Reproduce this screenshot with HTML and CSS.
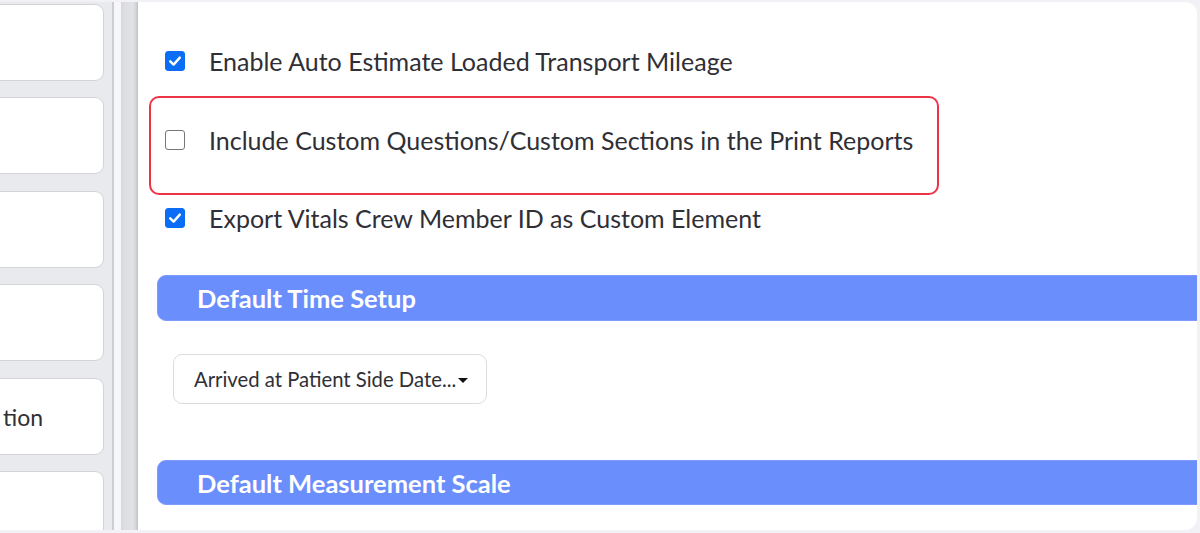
FILE: index.html
```html
<!DOCTYPE html>
<html>
<head>
<meta charset="utf-8">
<link rel="stylesheet" href="styles.css">
</head>
<body>
<div class="window">
  <aside class="sidebar">
    <div class="cards">
      <div class="card"></div>
      <div class="card"></div>
      <div class="card"></div>
      <div class="card"></div>
      <div class="card"><span class="card-text">tion</span></div>
      <div class="card"></div>
    </div>
  </aside>
  <div class="divider">
    <div class="div-line"></div>
    <div class="div-light"></div>
    <div class="div-band"></div>
  </div>
  <main class="content">
    <label class="row row-first">
      <span class="check checked"><svg viewBox="0 0 18 18" width="18" height="18"><path d="M4.2 9.3 L7.6 12.6 L13.8 5.6" fill="none" stroke="#fff" stroke-width="2.4" stroke-linecap="round" stroke-linejoin="round"/></svg></span>
      <span class="label">Enable Auto Estimate Loaded Transport Mileage</span>
    </label>
    <div class="highlight">
      <label class="row">
        <span class="check"></span>
        <span class="label">Include Custom Questions/Custom Sections in the Print Reports</span>
      </label>
    </div>
    <label class="row row-third">
      <span class="check checked"><svg viewBox="0 0 18 18" width="18" height="18"><path d="M4.2 9.3 L7.6 12.6 L13.8 5.6" fill="none" stroke="#fff" stroke-width="2.4" stroke-linecap="round" stroke-linejoin="round"/></svg></span>
      <span class="label">Export Vitals Crew Member ID as Custom Element</span>
    </label>
    <div class="section-head head-time">Default Time Setup</div>
    <div class="select">
      <span class="select-text">Arrived at Patient Side Date...</span>
      <span class="caret"></span>
    </div>
    <div class="section-head head-measure">Default Measurement Scale</div>
  </main>
</div>
</body>
</html>
```
FILE: styles.css
```css
* { box-sizing: border-box; }
html, body { margin: 0; padding: 0; }
body {
  width: 1200px;
  height: 533px;
  background: #f2f2f6;
  font-family: Lato, "Open Sans", sans-serif;
  color: #2f2f35;
  overflow: hidden;
}
.window {
  display: flex;
  height: 528px;
  margin: 2px 3px 0 0;
  background: #ffffff;
  border-radius: 0 12px 12px 0;
  overflow: hidden;
}
.sidebar {
  width: 112px;
  flex: none;
  background: #e9eaee;
  overflow: hidden;
}
.cards {
  display: flex;
  flex-direction: column;
  gap: 16.4px;
  padding-top: 2px;
}
.card {
  width: 114px;
  height: 77px;
  flex: none;
  margin-left: -10px;
  background: #fff;
  border: 1.5px solid #d3d4d8;
  border-radius: 9px;
  display: flex;
  align-items: center;
}
.card-text {
  margin-left: 12px;
  margin-top: 2px;
  font-size: 23px;
  color: #2f2f35;
}
.divider {
  display: flex;
  flex: none;
  width: 26px;
}
.div-line { width: 2px; background: #cdced2; }
.div-light { width: 7px; background: #f7f7f9; }
.div-band {
  width: 17px;
  background: linear-gradient(to right, #d4d5d9 0, #dddee2 3px, #e1e2e5 12px, #d3d4d8 15px, #bfc0c4 17px);
}
.content {
  flex: 1;
  padding: 39px 0 0 19px;
  display: flex;
  flex-direction: column;
  align-items: flex-start;
  min-width: 0;
}
.row {
  display: flex;
  align-items: center;
  height: 40px;
  padding-left: 8px;
}
.check {
  width: 20px;
  height: 20px;
  border: 1.5px solid #767676;
  border-radius: 3px;
  flex: none;
  background: #fff;
  display: flex;
  align-items: center;
  justify-content: center;
}
.check.checked {
  background: #0b6df5;
  border-color: #0b6df5;
}
.check svg { display: block; }
.label {
  margin-left: 24px;
  font-size: 25px;
  color: #2f2f35;
  white-space: nowrap;
}
.highlight {
  margin: 15px 0 0 -8px;
  width: 790px;
  height: 99px;
  border: 2px solid #ee3346;
  border-radius: 10px;
  padding: 22px 0 0 6px;
}
.row-third { margin-top: 3px; }
.section-head {
  align-self: stretch;
  height: 46px;
  margin-right: -12px;
  background: #6a8efc;
  border: 1px solid #7d9bfd;
  border-radius: 9px 0 0 9px;
  color: #ffffff;
  font-weight: 700;
  font-size: 25.5px;
  display: flex;
  align-items: center;
  padding-left: 39px;
}
.head-time { margin-top: 37px; }
.head-measure { margin-top: 56px; height: 45px; }
.select {
  margin: 33px 0 0 16px;
  width: 314px;
  height: 50px;
  border: 1.5px solid #dcdcdf;
  border-radius: 9px;
  display: flex;
  align-items: center;
  padding-left: 20px;
}
.select-text {
  font-size: 20.3px;
  color: #2f2f35;
  white-space: nowrap;
}
.caret {
  width: 0;
  height: 0;
  margin-left: 2px;
  margin-top: 2px;
  border-left: 5px solid transparent;
  border-right: 5px solid transparent;
  border-top: 5px solid #111;
}
```
